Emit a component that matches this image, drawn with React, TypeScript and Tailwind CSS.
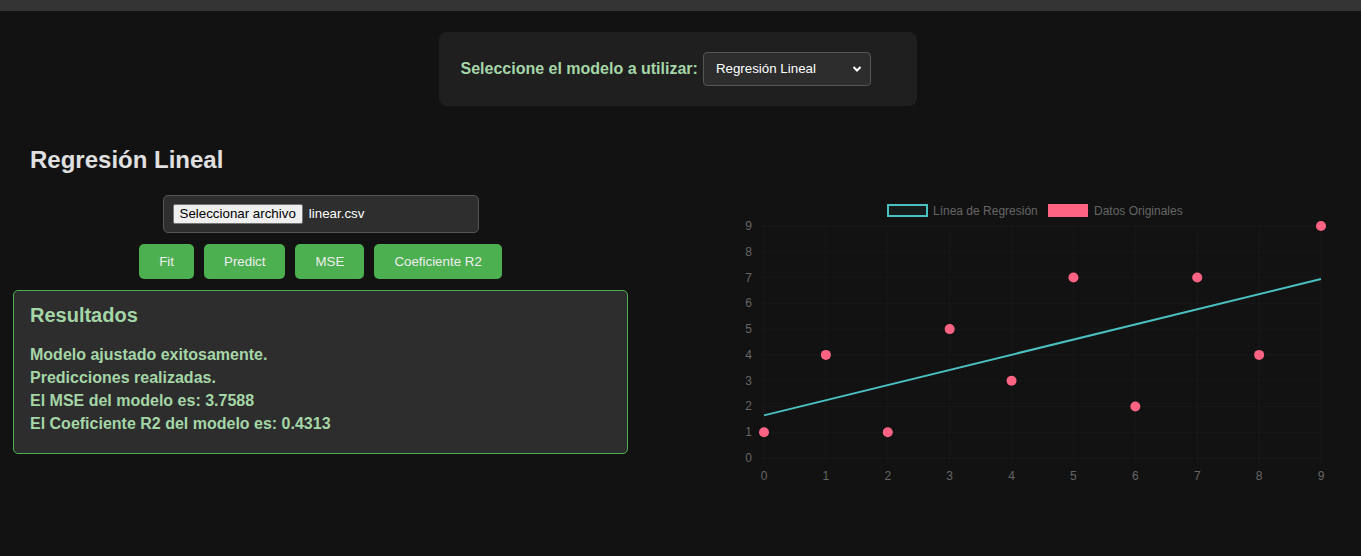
import React from "react";

const points = [
  [0, 1], [1, 4], [2, 1], [3, 5], [4, 3], [5, 7], [6, 2], [7, 7], [8, 4], [9, 9],
];

// chart plot area inside the svg
const X0 = 34;
const X1 = 591;
const Y0 = 263;
const Y1 = 31;
const px = (x: number) => X0 + (x / 9) * (X1 - X0);
const py = (y: number) => Y0 - (y / 9) * (Y0 - Y1);

const slope = 48.5 / 82.5;
const intercept = 4.3 - slope * 4.5;

const Chart: React.FC = () => {
  const ticks = Array.from({ length: 10 }, (_, i) => i);
  return (
    <svg width="600" height="295" className="block" style={{ fontFamily: '"Liberation Sans", Arial, sans-serif' }}>
      {/* legend */}
      <rect x="158" y="10" width="39" height="11" fill="rgba(75,192,192,0.05)" stroke="#4bc0c0" strokeWidth="2" />
      <text x="203" y="19.5" fontSize="12" fill="#666">Línea de Regresión</text>
      <rect x="318" y="9" width="40" height="13" fill="#ff6384" />
      <text x="364" y="19.5" fontSize="12" fill="#666">Datos Originales</text>

      {/* grid */}
      {ticks.map(i => (
        <line key={"v" + i} x1={px(i)} x2={px(i)} y1={Y1} y2={Y0 + 6} stroke="#181818" strokeWidth="1" />
      ))}
      {ticks.map(i => (
        <line key={"h" + i} x1={X0 - 6} x2={X1} y1={py(i)} y2={py(i)} stroke="#181818" strokeWidth="1" />
      ))}

      {/* axis labels */}
      {ticks.map(i => (
        <text key={"yl" + i} x={X0 - 12} y={py(i) + 4} fontSize="12" fill="#666" textAnchor="end">{i}</text>
      ))}
      {ticks.map(i => (
        <text key={"xl" + i} x={px(i)} y={Y0 + 22} fontSize="12" fill="#666" textAnchor="middle">{i}</text>
      ))}

      {/* regression line */}
      <line x1={px(0)} y1={py(intercept)} x2={px(9)} y2={py(intercept + slope * 9)} stroke="#4bc0c0" strokeWidth="2" />

      {/* data points */}
      {points.map(([x, y]) => (
        <circle key={x} cx={px(x)} cy={py(y)} r="5" fill="#ff6384" />
      ))}
    </svg>
  );
};

const App: React.FC = () => {
  return (
    <div className="min-h-screen bg-[#121212] font-['Liberation_Sans',Arial,sans-serif]">
      <div className="h-[11px] bg-[#333333]" />

      <div className="flex justify-center pt-[21px] pr-[6px]">
        <div className="w-[478px] h-[74px] bg-[#1f1f1f] rounded-lg flex items-center pl-[22px] gap-[5px]">
          <label className="text-[#a5d6a7] font-bold text-base">Seleccione el modelo a utilizar:</label>
          <div className="relative w-[168px] h-[34px] bg-[#2d2d2d] border border-[#555] rounded-[4px] flex items-center pl-[12px] text-[13.33px] text-white">
            Regresión Lineal
            <svg className="absolute right-[8px] top-[12px]" width="10" height="8" viewBox="0 0 10 8">
              <path d="M1.5 2 L5 5.5 L8.5 2" fill="none" stroke="#fff" strokeWidth="2" />
            </svg>
          </div>
        </div>
      </div>

      <div className="flex pt-[40px]">
        <div className="w-[641px] px-[13px]">
          <h2 className="pl-[17px] text-[24px] leading-[28px] font-bold text-[#e0e0e0]">Regresión Lineal</h2>

          <div className="flex justify-center mt-[21px]">
            <div className="w-[316px] h-[38px] bg-[#2e2e2e] border border-[#555] rounded-[5px] flex items-center pl-[9px] gap-[6px]">
              <span className="h-[20px] px-[6px] bg-[#efefef] border border-[#767676] rounded-[2px] text-[13.33px] leading-[18px] text-black">Seleccionar archivo</span>
              <span className="text-[13.33px] text-white">linear.csv</span>
            </div>
          </div>

          <div className="flex justify-center gap-[10px] mt-[11px]">
            {["Fit", "Predict", "MSE", "Coeficiente R2"].map(b => (
              <button key={b} className="h-[35px] px-[20px] bg-[#4caf50] rounded-[5px] text-[13.33px] text-[#eeeeee]">
                {b}
              </button>
            ))}
          </div>

          <div className="mt-[11px] h-[164px] border border-[#4caf50] rounded-[5px] bg-[#2d2d2d] px-[16px] pt-[12px]">
            <h3 className="text-[20px] leading-[24px] font-bold text-[#a5d6a7]">Resultados</h3>
            <div className="mt-[16px] text-base leading-[23px] font-bold text-[#a5d6a7]">
              <p>Modelo ajustado exitosamente.</p>
              <p>Predicciones realizadas.</p>
              <p>El MSE del modelo es: 3.7588</p>
              <p>El Coeficiente R2 del modelo es: 0.4313</p>
            </div>
          </div>
        </div>

        <div className="flex-1 pl-[89px] pt-[49px]">
          <Chart />
        </div>
      </div>
    </div>
  );
};

export default App;
